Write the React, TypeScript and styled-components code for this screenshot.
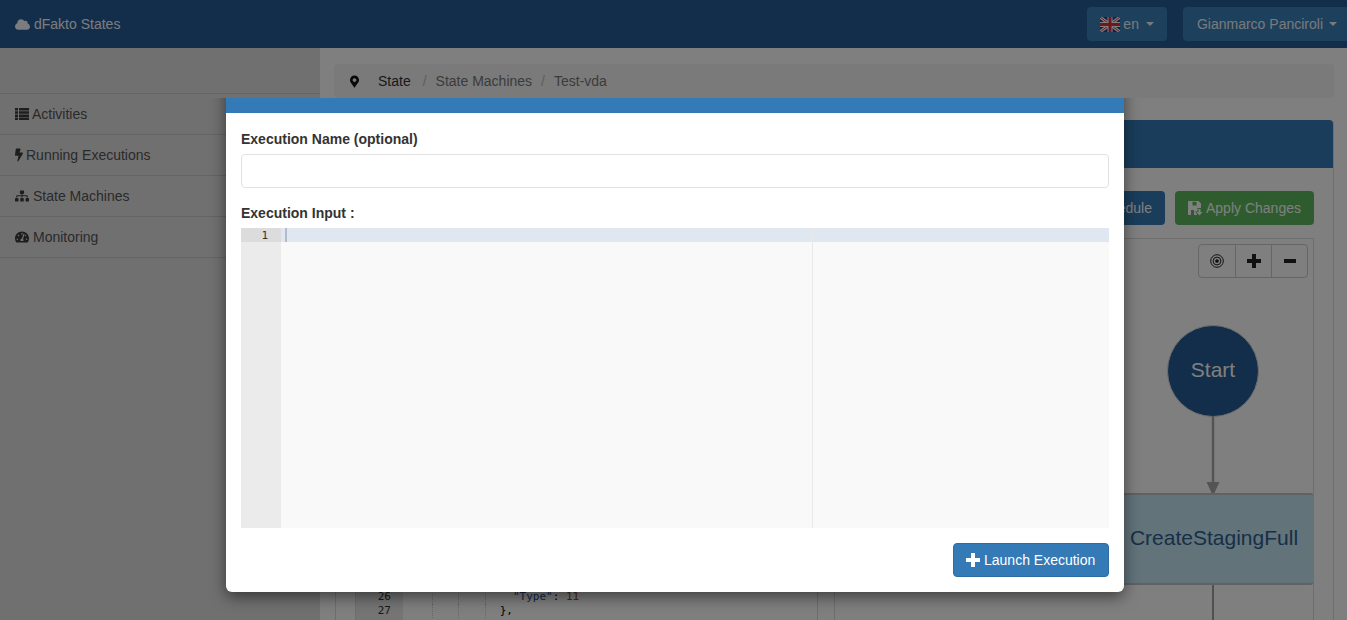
import styled, { createGlobalStyle } from 'styled-components';
import { FaBolt, FaCloud, FaMapMarkerAlt, FaSitemap, FaTachometerAlt } from 'react-icons/fa';

const GlobalStyle = createGlobalStyle`
    html, body {
        margin: 0;
        height: 100%;
        overflow: hidden;
        font-family: "Liberation Sans", Arial, sans-serif;
        font-size: 14px;
        color: #333;
        background: #fff;
    }
    * {
        box-sizing: border-box;
    }
`;

const ListIcon = () => (
    <svg viewBox="0 0 14 12" fill="currentColor">
        <path d="M0 0H3V2.5H0ZM4 0H14V2.5H4ZM0 3.2H3V5.7H0ZM4 3.2H14V5.7H4ZM0 6.4H3V8.9H0ZM4 6.4H14V8.9H4ZM0 9.6H3V12H0ZM4 9.6H14V12H4Z" />
    </svg>
);

const menuItems = [
    { label: 'Activities', icon: <ListIcon />, iconWidth: 14, gap: 3 },
    { label: 'Running Executions', icon: <FaBolt />, iconWidth: 8, gap: 3 },
    { label: 'State Machines', icon: <FaSitemap />, iconWidth: 14, gap: 4 },
    { label: 'Monitoring', icon: <FaTachometerAlt />, iconWidth: 14, gap: 4 },
];

const lineNumbers = Array.from({ length: 27 }, (_, i) => i + 1);

const UkFlag = () => (
    <svg width="20" height="15" viewBox="0 0 20 15">
        <rect width="20" height="15" fill="#2a3f8f" />
        <path d="M0 0L20 15M20 0L0 15" stroke="#fff" strokeWidth="3" />
        <path d="M0 0L20 15M20 0L0 15" stroke="#d8303c" strokeWidth="1" />
        <path d="M10 0V15M0 7.5H20" stroke="#fff" strokeWidth="5" />
        <path d="M10 0V15M0 7.5H20" stroke="#d8303c" strokeWidth="3" />
    </svg>
);

const SaveArrowIcon = () => (
    <svg width="15" height="15" viewBox="0 0 15 15" fill="currentColor">
        <path fillRule="evenodd" d="M0 1C0 .4.4 0 1 0H10.5L13 2.5V7H9.5V10.5H7L9 13V14H1C.4 14 0 13.6 0 13ZM4.5 .8V4.5H8.5V.8ZM3 9V14H6V9Z" />
        <path d="M10.5 8H12.5V11H14.5L11.5 14.5L8.5 11H10.5Z" />
    </svg>
);

const TargetIcon = () => (
    <svg width="14" height="14" viewBox="0 0 14 14" fill="none" stroke="#222">
        <circle cx="7" cy="7" r="6.3" strokeWidth="1" />
        <circle cx="7" cy="7" r="3.9" strokeWidth="1" />
        <circle cx="7" cy="7" r="1.6" fill="#222" strokeWidth="0.5" />
    </svg>
);

const PlusIcon = () => (
    <svg viewBox="0 0 14 14" fill="currentColor">
        <path d="M5 0H9V5H14V9H9V14H5V9H0V5H5Z" />
    </svg>
);

const MinusIcon = () => (
    <svg viewBox="0 0 14 14" fill="currentColor">
        <path d="M1 5H13V9H1Z" />
    </svg>
);

const App = () => {
    return (
        <Page>
            <GlobalStyle />
            <Navbar>
                <Brand><FaCloud /> dFakto States</Brand>
                <NavActions>
                    <NavButton><UkFlag /> en <Caret /></NavButton>
                    <UserButton>Gianmarco Panciroli <Caret /></UserButton>
                </NavActions>
            </Navbar>
            <Body>
                <Sidebar>
                    {menuItems.map((item) => (
                        <MenuItem key={item.label} $gap={item.gap} $iconWidth={item.iconWidth}>
                            {item.icon} {item.label}
                        </MenuItem>
                    ))}
                </Sidebar>
                <Main>
                    <Breadcrumb>
                        <PinIcon><FaMapMarkerAlt /></PinIcon>
                        <CrumbActive>State</CrumbActive>
                        <CrumbDivider>/</CrumbDivider>
                        <Crumb>State Machines</Crumb>
                        <CrumbDivider>/</CrumbDivider>
                        <Crumb>Test-vda</Crumb>
                    </Breadcrumb>
                    <Panel>
                        <PanelHeading />
                        <PanelBody>
                            <Toolbar>
                                <PrimaryButton>Schedule</PrimaryButton>
                                <SuccessButton><SaveArrowIcon /> Apply Changes</SuccessButton>
                            </Toolbar>
                            <Columns>
                                <Editor>
                                    <EditorGutter>
                                        {lineNumbers.map((n) => <div key={n}>{n}</div>)}
                                    </EditorGutter>
                                    <EditorCode>
                                        {lineNumbers.map((n) => (
                                            <CodeLine key={n}>
                                                {n === 26 && (
                                                    <>
                                                        <Guide /><Guide /><Guide />
                                                        <CodeText>{'    '}<CodeString>"Type"</CodeString>: <CodeNumber>11</CodeNumber></CodeText>
                                                    </>
                                                )}
                                                {n === 27 && (
                                                    <>
                                                        <Guide /><Guide /><Guide />
                                                        <CodeText>{'  },'}</CodeText>
                                                    </>
                                                )}
                                            </CodeLine>
                                        ))}
                                    </EditorCode>
                                </Editor>
                                <Canvas>
                                    <ZoomGroup>
                                        <ZoomButton><TargetIcon /></ZoomButton>
                                        <ZoomButton><PlusIcon /></ZoomButton>
                                        <ZoomButton><MinusIcon /></ZoomButton>
                                    </ZoomGroup>
                                    <StartNode>Start</StartNode>
                                    <Arrow width="16" height="80" viewBox="0 0 16 80">
                                        <path d="M8 0V68" stroke="#a8a8a8" strokeWidth="2.5" />
                                        <path d="M1.5 66H14.5L8 80Z" fill="#a8a8a8" />
                                    </Arrow>
                                    <TaskNode>CreateStagingFull</TaskNode>
                                    <NextEdge />
                                </Canvas>
                            </Columns>
                        </PanelBody>
                    </Panel>
                </Main>
            </Body>
            <Backdrop />
            <ModalClip>
                <Modal>
                    <ModalHeader />
                    <ModalBody>
                        <FieldLabel>Execution Name (optional)</FieldLabel>
                        <TextInput type="text" />
                        <FieldLabel>Execution Input :</FieldLabel>
                        <InputEditor>
                            <InputGutter>
                                <ActiveNumber>1</ActiveNumber>
                            </InputGutter>
                            <InputArea>
                                <ActiveLine><Cursor /></ActiveLine>
                                <PrintMargin />
                            </InputArea>
                        </InputEditor>
                        <ModalFooter>
                            <LaunchButton><PlusIcon /> Launch Execution</LaunchButton>
                        </ModalFooter>
                    </ModalBody>
                </Modal>
            </ModalClip>
        </Page>
    );
};

const Page = styled.div`
    width: 1347px;
    height: 620px;
    overflow: hidden;
    position: relative;
`;
const Navbar = styled.div`
    display: flex;
    align-items: center;
    justify-content: space-between;
    height: 48px;
    padding: 0 0 0 15px;
    background-color: #265d95;
    color: #fff;
`;
const Brand = styled.div`
    display: flex;
    align-items: center;
    gap: 4px;
    color: #f4f8fc;
    svg {
        width: 15px;
        height: 15px;
    }
`;
const NavActions = styled.div`
    display: flex;
    gap: 16px;
    margin-right: -3px;
`;
const NavButton = styled.div`
    display: flex;
    align-items: center;
    gap: 3px;
    height: 34px;
    padding: 0 13px;
    border-radius: 4px;
    background-color: #3a80bb;
    color: #f0f4f8;
`;
const UserButton = styled(NavButton)`
    gap: 2px;
    padding: 0 13px 0 14px;
`;
const Caret = styled.span`
    width: 0;
    height: 0;
    margin-left: 4px;
    border-top: 4px solid #f0f4f8;
    border-left: 4px solid transparent;
    border-right: 4px solid transparent;
`;
const Body = styled.div`
    display: flex;
    height: 572px;
`;
const Sidebar = styled.div`
    width: 320px;
    flex-shrink: 0;
    padding-top: 45px;
    background-color: #e0e0e0;
`;
const MenuItem = styled.div<{ $gap: number; $iconWidth: number }>`
    display: flex;
    align-items: center;
    gap: ${({ $gap }) => $gap}px;
    height: 41px;
    padding-left: 15px;
    border-top: 1px solid #c9c9c9;
    color: #555;
    &:last-child {
        height: 42px;
        border-bottom: 1px solid #c9c9c9;
    }
    svg {
        width: ${({ $iconWidth }) => $iconWidth}px;
        height: 14px;
        color: #3c3c3c;
    }
`;
const Main = styled.div`
    flex: 1;
    padding: 16px 13px 0 14px;
    background-color: #fff;
`;
const Breadcrumb = styled.div`
    display: flex;
    align-items: center;
    height: 34px;
    padding-left: 16px;
    border-radius: 4px;
    background-color: #f5f5f5;
`;
const PinIcon = styled.span`
    display: flex;
    width: 28px;
    color: #111;
    svg {
        width: 9px;
        height: 13px;
    }
`;
const CrumbActive = styled.span`
    margin-right: 3px;
    color: #333;
`;
const Crumb = styled.span`
    color: #777;
`;
const CrumbDivider = styled.span`
    padding: 0 9px;
    color: #bbb;
`;
const Panel = styled.div`
    margin: 22px 0 0 1px;
    height: 520px;
    border: 1px solid #ddd;
    border-top: 0;
    border-radius: 4px 4px 0 0;
`;
const PanelHeading = styled.div`
    height: 48px;
    margin: 0 0 0 -1px;
    border-radius: 4px 4px 0 0;
    background-color: #337ab7;
`;
const PanelBody = styled.div`
    padding: 23px 19px 0 19px;
`;
const Toolbar = styled.div`
    display: flex;
    justify-content: flex-end;
    gap: 10px;
    height: 34px;
`;
const PrimaryButton = styled.div`
    display: flex;
    align-items: center;
    gap: 3px;
    padding: 0 13px 0 13px;
    border-radius: 4px;
    background-color: #337ab7;
    color: #fff;
`;
const SuccessButton = styled(PrimaryButton)`
    padding: 0 13px 0 13px;
    width: 139px;
    background-color: #5cb85c;
`;
const Columns = styled.div`
    display: grid;
    grid-template-columns: 463px 480px;
    gap: 16px;
    margin-top: 13px;
`;
const Editor = styled.div`
    display: flex;
    height: 420px;
    padding-top: 2px;
    border-left: 1px solid #ddd;
    border-right: 1px solid #ddd;
    font-family: "DejaVu Sans Mono", monospace;
    font-size: 11px;
    line-height: 14px;
`;
const EditorGutter = styled.div`
    width: 47px;
    flex-shrink: 0;
    padding-right: 12px;
    background-color: #ebebeb;
    text-align: right;
    color: #333;
`;
const EditorCode = styled.div`
    flex: 1;
    padding-left: 3px;
    color: #000;
`;
const CodeLine = styled.div`
    height: 14px;
    white-space: pre;
`;
const Guide = styled.span`
    display: inline-block;
    width: 26.5px;
    height: 14px;
    vertical-align: top;
    border-right: 1px dotted #ccc;
`;
const CodeText = styled.span`
    margin-left: 1px;
`;
const CodeString = styled.span`
    color: #2a4a9a;
`;
const CodeNumber = styled.span`
    color: #9c5518;
`;
const Canvas = styled.div`
    position: relative;
    height: 420px;
    border: 1px solid #ddd;
    overflow: hidden;
`;
const ZoomGroup = styled.div`
    position: absolute;
    top: 5px;
    right: 5px;
    display: flex;
    height: 34px;
    border: 1px solid #ccc;
    border-radius: 4px;
    background-color: #fff;
`;
const ZoomButton = styled.div`
    display: flex;
    align-items: center;
    justify-content: center;
    width: 36px;
    color: #222;
    & + & {
        border-left: 1px solid #ccc;
    }
    svg {
        width: 14px;
        height: 14px;
    }
`;
const StartNode = styled.div`
    position: absolute;
    top: 86px;
    left: 332px;
    width: 92px;
    height: 92px;
    display: flex;
    align-items: center;
    justify-content: center;
    padding-bottom: 2px;
    border: 1px solid #ddd;
    border-radius: 50%;
    background-color: #265c94;
    color: #fff;
    font-size: 21px;
`;
const Arrow = styled.svg`
    position: absolute;
    top: 177px;
    left: 370px;
`;
const TaskNode = styled.div`
    position: absolute;
    top: 254px;
    left: 277px;
    width: 202px;
    height: 92px;
    display: flex;
    align-items: center;
    justify-content: center;
    padding-bottom: 2px;
    border: 2px solid #bcc4c8;
    border-right: 0;
    border-radius: 4px;
    background-color: #c5e6f4;
    color: #2f5f8f;
    font-size: 21px;
`;
const NextEdge = styled.div`
    position: absolute;
    top: 346px;
    left: 377px;
    width: 2px;
    height: 60px;
    background-color: #a0a0a0;
`;
const Backdrop = styled.div`
    position: absolute;
    inset: 0;
    background-color: rgba(0, 0, 0, 0.5);
`;
const ModalClip = styled.div`
    position: absolute;
    top: 98px;
    left: 0;
    right: 0;
    bottom: 0;
    overflow: hidden;
`;
const Modal = styled.div`
    width: 898px;
    margin: -42px 0 0 226px;
    border-radius: 6px;
    background-color: #fff;
    box-shadow: 0 5px 15px rgba(0, 0, 0, 0.5);
`;
const ModalHeader = styled.div`
    height: 57px;
    border-radius: 6px 6px 0 0;
    background-color: #337ab7;
`;
const ModalBody = styled.div`
    padding: 16px 15px 15px;
`;
const FieldLabel = styled.label`
    display: block;
    margin-bottom: 5px;
    font-weight: bold;
    line-height: 20px;
    color: #333;
`;
const TextInput = styled.input`
    display: block;
    width: 100%;
    height: 34px;
    margin-bottom: 15px;
    border: 1px solid #e2e2e2;
    border-radius: 4px;
    outline: none;
    background-color: #fff;
`;
const InputEditor = styled.div`
    display: flex;
    height: 300px;
    font-family: "DejaVu Sans Mono", monospace;
    font-size: 11px;
    line-height: 14px;
    background-color: #f9f9f9;
`;
const InputGutter = styled.div`
    width: 40px;
    flex-shrink: 0;
    background-color: #ebebeb;
`;
const ActiveNumber = styled.div`
    height: 14px;
    padding-right: 13px;
    line-height: 15px;
    text-align: right;
    color: #333;
    background-color: #dcdcdc;
`;
const InputArea = styled.div`
    position: relative;
    flex: 1;
`;
const ActiveLine = styled.div`
    height: 14px;
    padding-left: 4px;
    background-color: #e0e7f1;
`;
const Cursor = styled.div`
    width: 2px;
    height: 14px;
    background-color: #b4bcc9;
`;
const PrintMargin = styled.div`
    position: absolute;
    top: 0;
    bottom: 0;
    left: 531px;
    width: 1px;
    background-color: #e8e8e8;
`;
const ModalFooter = styled.div`
    display: flex;
    justify-content: flex-end;
    margin-top: 15px;
`;
const LaunchButton = styled.div`
    display: flex;
    align-items: center;
    gap: 4px;
    width: 156px;
    height: 34px;
    padding: 0 12px;
    border: 1px solid #2e6da4;
    border-radius: 4px;
    background-color: #337ab7;
    color: #fff;
    svg {
        width: 14px;
        height: 14px;
    }
`;

export default App;
